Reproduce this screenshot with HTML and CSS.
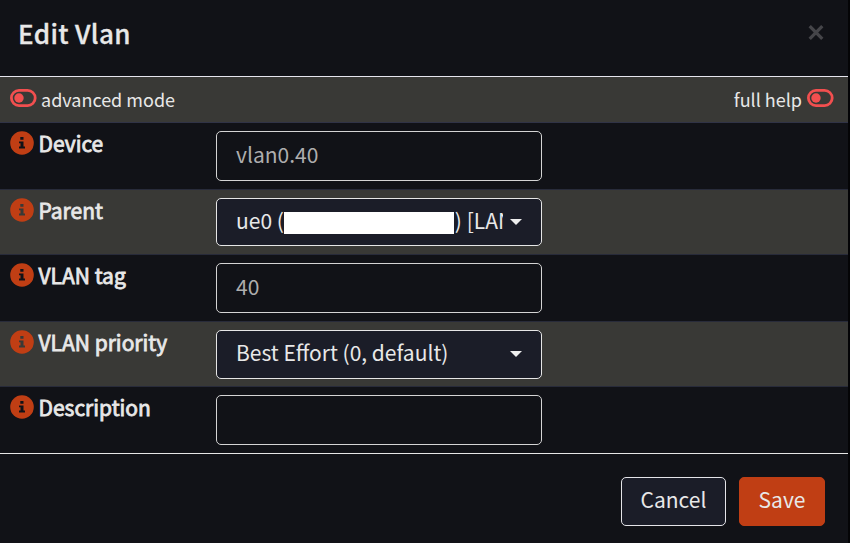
FILE: index.html
```html
<!DOCTYPE html>
<html lang="en">
<head>
<meta charset="utf-8">
<title>Edit Vlan</title>
<link rel="stylesheet" href="styles.css">
</head>
<body>
<svg class="defs" aria-hidden="true">
  <symbol id="info" viewBox="0 0 24 24">
    <circle cx="12" cy="12" r="11.8" fill="#c03e14"/>
    <path d="M10.3 6h3.2v2.7h-3.2zM9 10.4h4.5v5.2h1.5v1.9H9v-1.9h1.5v-3.3H9z" fill="currentColor"/>
  </symbol>
  <symbol id="toggle" viewBox="0 0 27 18">
    <rect x="1.4" y="1.4" width="23.8" height="15.2" rx="7.6" fill="none" stroke="#f24f4f" stroke-width="2.8"/>
    <circle cx="9" cy="9" r="4.7" fill="#f24f4f"/>
  </symbol>
</svg>
<div class="modal">
  <header class="header">
    <h1 class="title">Edit Vlan</h1>
    <svg class="close" viewBox="0 0 16 16"><path d="M1.7 1.2l12.6 12.6M14.3 1.2L1.7 13.8"/></svg>
  </header>
  <div class="toolbar">
    <div class="mode"><svg class="toggle"><use href="#toggle"/></svg><span>advanced mode</span></div>
    <div class="mode"><span>full help</span><svg class="toggle"><use href="#toggle"/></svg></div>
  </div>
  <div class="row device">
    <div class="label"><svg class="info"><use href="#info"/></svg><span>Device</span></div>
    <div class="field input">vlan0.40</div>
  </div>
  <div class="row alt parent">
    <div class="label"><svg class="info"><use href="#info"/></svg><span>Parent</span></div>
    <div class="field select"><div class="value">ue0 (<i class="mask"></i>) [LAN]</div><i class="caret"></i></div>
  </div>
  <div class="row tag">
    <div class="label"><svg class="info"><use href="#info"/></svg><span>VLAN tag</span></div>
    <div class="field input">40</div>
  </div>
  <div class="row alt priority">
    <div class="label"><svg class="info"><use href="#info"/></svg><span>VLAN priority</span></div>
    <div class="field select"><div class="value">Best Effort (0, default)</div><i class="caret"></i></div>
  </div>
  <div class="row description">
    <div class="label"><svg class="info"><use href="#info"/></svg><span>Description</span></div>
    <div class="field input"></div>
  </div>
  <footer class="footer">
    <button class="btn cancel">Cancel</button>
    <button class="btn save">Save</button>
  </footer>
</div>
</body>
</html>
```
FILE: styles.css
```css
* { box-sizing: border-box; }
body { margin: 0; background: #040406; color: #e8e8e8; font-family: "Noto Sans CJK SC", "Noto Sans", sans-serif; }
.defs { position: absolute; width: 0; height: 0; }
.modal { width: 848px; height: 543px; background: #111217; display: flex; flex-direction: column; }
.header { height: 77px; border-bottom: 1px solid #e6e6ee; display: flex; justify-content: space-between; padding: 13px 24px 0 18px; }
.title { margin: 0; font-size: 26px; font-weight: 500; line-height: 40px; letter-spacing: 0.35px; -webkit-text-stroke: 0.3px; }
.close { width: 16px; height: 16px; margin-top: 12px; fill: none; stroke: #454549; stroke-width: 3.3; }
.toolbar { height: 46px; background: #393936; border-bottom: 1px solid #303346; display: flex; justify-content: space-between; padding: 7px 15px 0 10px; }
.mode { display: flex; gap: 4px; font-size: 18px; line-height: 30px; }
.toggle { width: 27px; height: 18px; margin-top: 5px; }
.mode:last-child { gap: 5px; }
.mode > .toggle:last-child { margin-right: -1px; }
.row { height: 66px; border-bottom: 1px solid #282b3a; display: flex; padding-top: 8px; }
.device { height: 67px; }
.parent { height: 65px; }
.tag { height: 67px; }
.priority { height: 65px; }
.description { height: 67px; border-bottom-color: #e6e6e6; }
.alt { background: #393936; }
.label { width: 216px; padding-left: 10px; display: flex; gap: 4.5px; font-size: 21px; line-height: 25px; -webkit-text-stroke: 0.8px; }
.info { width: 24px; height: 24px; color: #111217; -webkit-text-stroke: 0; }
.alt .info { color: #393936; }
.field { width: 326px; height: 50px; border: 1px solid #d4d4d4; border-radius: 5px; padding: 0 19px; font-size: 21px; line-height: 45px; }
.input { color: #aeaeae; }
.select { height: 49px; border-color: #e6e6e6; background: #1b1d28; display: flex; justify-content: space-between; line-height: 43px; }
.parent .field { height: 48px; }
.value { width: 268px; overflow: hidden; white-space: nowrap; display: flex; }
.parent .value { width: 267px; margin-right: 1px; }
.mask { width: 170px; height: 22px; margin: 13px 1px 0 0; background: #fff; flex: none; }
.caret { border: 6px solid transparent; border-top-color: #eee; border-bottom: 0; height: 0; margin-top: 20px; }
.footer { flex: 1; display: flex; justify-content: flex-end; gap: 13px; padding: 23px 23px 0; }
.btn { height: 49px; border-radius: 5px; padding: 0 0 5px; font: 21px/42px "Noto Sans CJK SC", "Noto Sans", sans-serif; color: #e8e8e8; }
.cancel { width: 105px; border: 1px solid #e4e4e8; background: #1b1d28; }
.save { width: 86px; border: 1px solid #c03e14; background: #c03e14; }
```
